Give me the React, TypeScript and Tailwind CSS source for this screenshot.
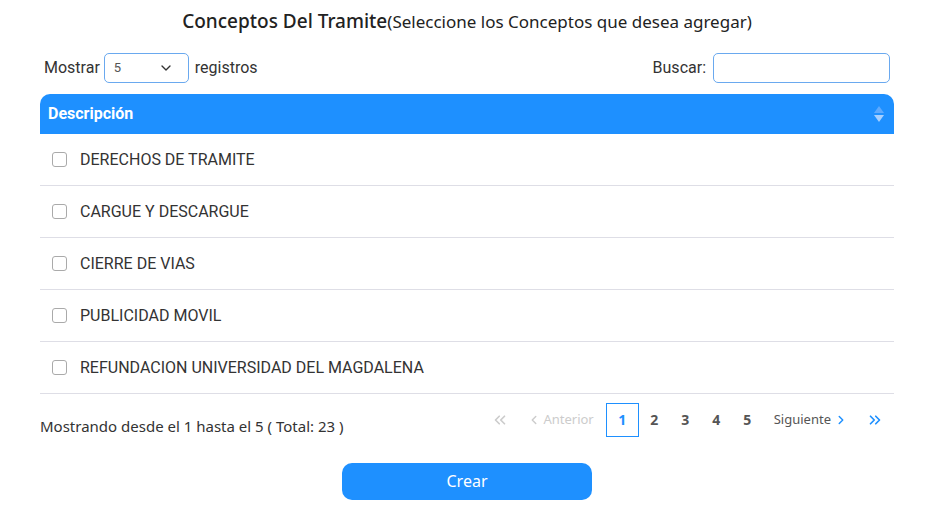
import { ChevronDown, ChevronLeft, ChevronRight, ChevronsLeft, ChevronsRight } from 'lucide-react';

const conceptos = [
	'DERECHOS DE TRAMITE',
	'CARGUE Y DESCARGUE',
	'CIERRE DE VIAS',
	'PUBLICIDAD MOVIL',
	'REFUNDACION UNIVERSIDAD DEL MAGDALENA'
];

const segoe = { fontFamily: '"Noto Sans", "Open Sans", sans-serif' };

const App = () => {
	return (
		<div className="h-[509px] w-[941px] bg-white pr-[47px] pl-10 text-[#222]">
			<h1
				className="pt-[7px] text-center text-[19px] leading-[28px] font-medium text-[#222]"
				style={segoe}>
				Conceptos Del Tramite
				<span className="text-[17px] font-normal">(Seleccione los Conceptos que desea agregar)</span>
			</h1>

			<div
				className="mt-[17px] flex items-center justify-between pl-[4px] text-[16px] text-[#333]"
				style={{ fontFamily: 'Roboto, sans-serif' }}>
				<div className="flex items-center gap-[4px]">
					<span>Mostrar</span>
					<div className="flex h-[30px] w-[85px] items-center justify-between rounded-[5px] border border-[#6aa9ef] pr-[14px] pl-[9px] text-[13px] text-[#555]">
						<span>5</span>
						<ChevronDown size={16} strokeWidth={2} className="text-[#333]" />
					</div>
					<span className="ml-[2px]">registros</span>
				</div>
				<div className="mr-[4px] flex items-center gap-[7px]">
					<span>Buscar:</span>
					<div className="h-[30px] w-[177px] rounded-[5px] border border-[#6aa9ef]" />
				</div>
			</div>

			<div className="mt-[11px]" style={{ fontFamily: 'Roboto, sans-serif' }}>
				<div className="flex h-[40px] items-center justify-between rounded-t-[10px] bg-[#1e90ff] pr-[9px] pl-[8px]">
					<span className="text-[16px] font-bold text-white">Descripción</span>
					<svg width="12" height="18" viewBox="0 0 12 18">
						<path d="M6 1 L11 8 H1 Z" fill="#5eaaff" />
						<path d="M6 17 L11 10 H1 Z" fill="#a8d0ff" />
					</svg>
				</div>
				{conceptos.map((c) => (
					<div key={c} className="flex h-[52px] items-center border-b border-[#dedee6] pl-[12px]">
						<span className="h-[15px] w-[15px] rounded-[3px] border border-[#aaa] bg-white" />
						<span className="ml-[13px] text-[16px] text-[#333]">{c}</span>
					</div>
				))}
			</div>

			<div className="flex items-center justify-between" style={segoe}>
				<span className="mt-[21px] text-[15px] text-[#333]">Mostrando desde el 1 hasta el 5 ( Total: 23 )</span>
				<div className="mt-[8px] mr-[10px] flex items-center text-[13px]">
					<ChevronsLeft size={18} strokeWidth={2.25} className="mr-[18px] text-[#ccc]" />
					<span className="mr-[12px] flex items-center gap-[2px] text-[#ccc]">
						<ChevronLeft size={14} strokeWidth={2.5} />
						Anterior
					</span>
					<span className="flex h-[34px] w-[33px] items-center justify-center border border-[#1e90ff] text-[14px] font-bold text-[#1e90ff]">
						1
					</span>
					{[2, 3, 4, 5].map((n) => (
						<span key={n} className="flex h-[34px] w-[31px] items-center justify-center text-[14px] font-bold text-[#555]">
							{n}
						</span>
					))}
					<span className="ml-[11px] flex items-center gap-[3px] text-[#555]">
						Siguiente
						<ChevronRight size={14} strokeWidth={2.5} className="text-[#1e90ff]" />
					</span>
					<ChevronsRight size={18} strokeWidth={2.25} className="ml-[18px] text-[#1e90ff]" />
				</div>
			</div>

			<div className="mt-[25px] flex justify-center">
				<button
					className="h-[37px] w-[250px] rounded-[10px] bg-[#1e90ff] text-[16px] text-white"
					style={segoe}>
					Crear
				</button>
			</div>
		</div>
	);
};

export default App;
